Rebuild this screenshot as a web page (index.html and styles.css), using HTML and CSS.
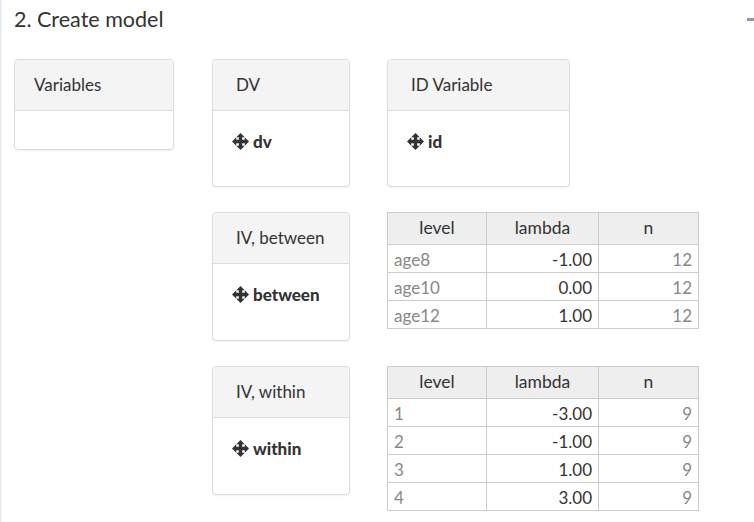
FILE: index.html
```html
<!DOCTYPE html>
<html>
<head>
<meta charset="utf-8">
<link rel="stylesheet" href="styles.css">
</head>
<body>
<div class="panel">
  <div class="title">2. Create model</div>
  <div class="collapse"></div>
  <div class="grid">
    <div class="box box-vars">
      <div class="box-head head-vars">Variables</div>
      <div class="box-body body-vars"></div>
    </div>
    <div class="box">
      <div class="box-head">DV</div>
      <div class="box-body"><span class="item"><svg class="move" viewBox="0 0 16 16"><path d="M8 0 L12 4 L9.6 4 L9.6 6.4 L12 6.4 L12 4 L16 8 L12 12 L12 9.6 L9.6 9.6 L9.6 12 L12 12 L8 16 L4 12 L6.4 12 L6.4 9.6 L4 9.6 L4 12 L0 8 L4 4 L4 6.4 L6.4 6.4 L6.4 4 L4 4 Z"/></svg>dv</span></div>
    </div>
    <div class="box box-id">
      <div class="box-head">ID Variable</div>
      <div class="box-body"><span class="item"><svg class="move" viewBox="0 0 16 16"><path d="M8 0 L12 4 L9.6 4 L9.6 6.4 L12 6.4 L12 4 L16 8 L12 12 L12 9.6 L9.6 9.6 L9.6 12 L12 12 L8 16 L4 12 L6.4 12 L6.4 9.6 L4 9.6 L4 12 L0 8 L4 4 L4 6.4 L6.4 6.4 L6.4 4 L4 4 Z"/></svg>id</span></div>
    </div>

    <div class="spacer"></div>
    <div class="box box-iv">
      <div class="box-head">IV, between</div>
      <div class="box-body"><span class="item"><svg class="move" viewBox="0 0 16 16"><path d="M8 0 L12 4 L9.6 4 L9.6 6.4 L12 6.4 L12 4 L16 8 L12 12 L12 9.6 L9.6 9.6 L9.6 12 L12 12 L8 16 L4 12 L6.4 12 L6.4 9.6 L4 9.6 L4 12 L0 8 L4 4 L4 6.4 L6.4 6.4 L6.4 4 L4 4 Z"/></svg>between</span></div>
    </div>
    <table class="levels">
      <thead><tr><th class="c-level">level</th><th class="c-lambda">lambda</th><th class="c-n">n</th></tr></thead>
      <tbody>
        <tr><td class="lv">age8</td><td class="lm">-1.00</td><td class="nn">12</td></tr>
        <tr><td class="lv">age10</td><td class="lm">0.00</td><td class="nn">12</td></tr>
        <tr><td class="lv">age12</td><td class="lm">1.00</td><td class="nn">12</td></tr>
      </tbody>
    </table>

    <div class="spacer"></div>
    <div class="box box-iv">
      <div class="box-head">IV, within</div>
      <div class="box-body"><span class="item"><svg class="move" viewBox="0 0 16 16"><path d="M8 0 L12 4 L9.6 4 L9.6 6.4 L12 6.4 L12 4 L16 8 L12 12 L12 9.6 L9.6 9.6 L9.6 12 L12 12 L8 16 L4 12 L6.4 12 L6.4 9.6 L4 9.6 L4 12 L0 8 L4 4 L4 6.4 L6.4 6.4 L6.4 4 L4 4 Z"/></svg>within</span></div>
    </div>
    <table class="levels">
      <thead><tr><th class="c-level">level</th><th class="c-lambda">lambda</th><th class="c-n">n</th></tr></thead>
      <tbody>
        <tr><td class="lv">1</td><td class="lm">-3.00</td><td class="nn">9</td></tr>
        <tr><td class="lv">2</td><td class="lm">-1.00</td><td class="nn">9</td></tr>
        <tr><td class="lv">3</td><td class="lm">1.00</td><td class="nn">9</td></tr>
        <tr><td class="lv">4</td><td class="lm">3.00</td><td class="nn">9</td></tr>
      </tbody>
    </table>
  </div>
</div>
</body>
</html>
```
FILE: styles.css
```css
html, body {
  margin: 0;
  padding: 0;
  background: #ffffff;
}
body {
  font-family: Lato, "Liberation Sans", sans-serif;
  color: #333333;
  width: 754px;
  height: 522px;
  overflow: hidden;
}
.panel {
  position: relative;
  border-left: 2px solid #e8ebf0;
  height: 522px;
  box-sizing: border-box;
  padding: 0 0 0 12px;
}
.title {
  font-size: 21.5px;
  line-height: 22px;
  padding-top: 8px;
  height: 30px;
  color: #333;
}
.collapse {
  position: absolute;
  top: 18px;
  right: 0;
  width: 7px;
  height: 3px;
  background: #8a9bb0;
}
.grid {
  margin-top: 21px;
  display: grid;
  grid-template-columns: 161px 138px auto;
  column-gap: 37px;
  row-gap: 25px;
  align-items: start;
}
.box {
  border: 1px solid #dcdcdc;
  border-radius: 4px;
  background: #fff;
  box-shadow: 0 1px 2px rgba(0,0,0,0.06);
  overflow: hidden;
}
.box-vars { width: 158px; }
.box-id { width: 181px; }
.box-head {
  background: #f4f4f4;
  border-bottom: 1px solid #dddddd;
  height: 50px;
  line-height: 49px;
  padding-left: 23px;
  font-size: 17px;
  color: #333;
}
.head-vars { padding-left: 19px; }
.box-body {
  height: 75px;
  padding: 19px 0 0 19px;
  box-sizing: border-box;
}
.body-vars { height: 38px; }
.box-iv .box-body { height: 76px; }
.item {
  display: flex;
  align-items: center;
  font-weight: 900;
  font-size: 17px;
  height: 22px;
  color: #333;
}
.move {
  width: 17px;
  height: 17px;
  fill: #333;
  margin-right: 4px;
}
.spacer { height: 1px; }
.levels {
  border-collapse: collapse;
  width: 312px;
  font-size: 17px;
  border: 1px solid #cccccc;
}
.levels th {
  background: #eeeeee;
  font-weight: normal;
  height: 28px;
  line-height: 20px;
  padding: 1px 0 2px 0;
  border: 1px solid #cccccc;
  text-align: center;
  color: #333;
  font-size: 17.5px;
}
.levels td {
  height: 25px;
  line-height: 20px;
  padding: 2px 6px 0 6px;
  border: 1px solid #cccccc;
}
.c-level { width: 98px; }
.c-lambda { width: 111px; }
.c-n { width: 99px; }
.lv { color: #888; text-align: left; }
.lm { color: #333; text-align: right; }
.nn { color: #888; text-align: right; }
```
